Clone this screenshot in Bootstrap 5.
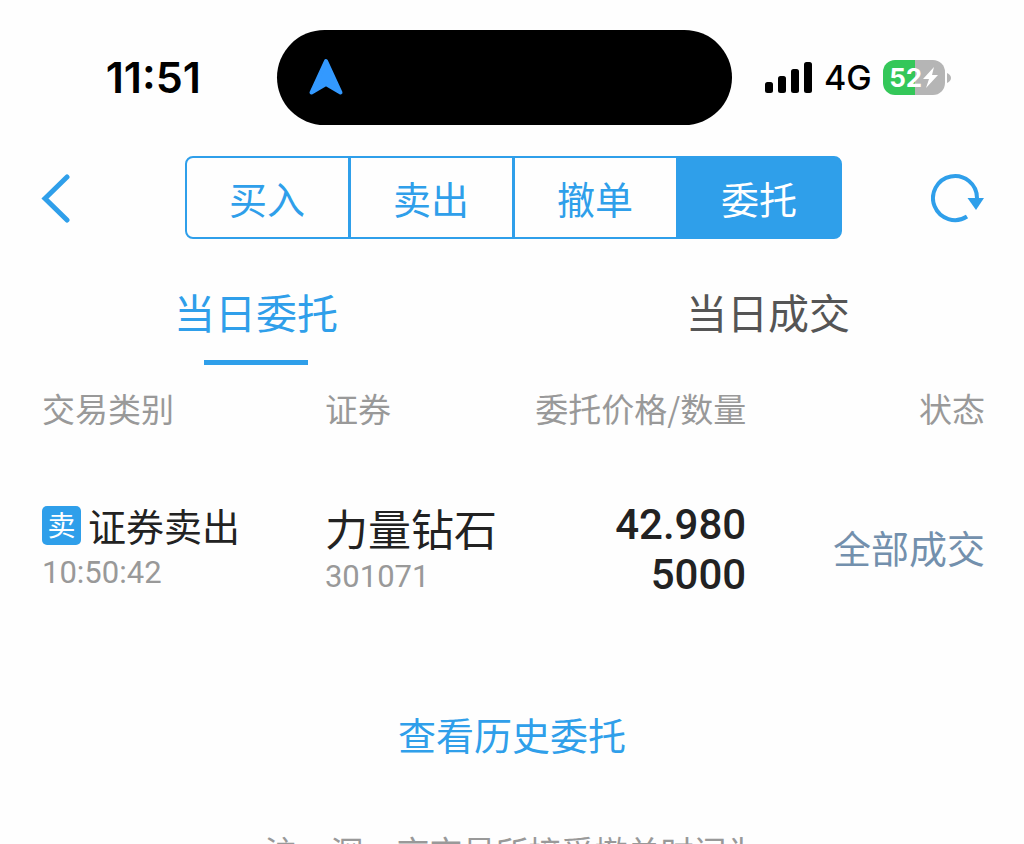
<!DOCTYPE html>
<html lang="zh-CN">
<head>
<meta charset="utf-8">
<meta name="viewport" content="width=device-width, initial-scale=1">
<title>当日委托</title>
<link href="https://cdn.jsdelivr.net/npm/bootstrap@5.3.0/dist/css/bootstrap.min.css" rel="stylesheet">
<style>
  :root { --brand: #2f9fea; --ink: #222; --muted: #999; }
  body { font-family: "Noto Sans CJK SC", sans-serif; font-weight: 400; color: var(--ink); background: #fefefe; }
  .phone-status { display: grid; grid-template-columns: 277fr 455fr 292fr; padding-top: 30px; color: #000; }
  .clock { font: 600 43px/1 Inter, sans-serif; padding-right: 76px; }
  .island { height: 95px; background: #000; padding-left: 31px; }
  .signal { gap: 11px; padding-left: 33px; }
  .network { font: 500 34px/1 Inter, sans-serif; }
  .battery-level { width: 62px; height: 35px; border-radius: 12px; background: linear-gradient(90deg, #34c759 52%, #b5b5b5 52%); color: #fff; font: 700 26px/1 Inter, sans-serif; gap: 1px; }
  .battery { gap: 2px; }
  .toolbar { padding: 31px 39px 0 41px; }
  .icon-btn { border: 0; background: none; padding: 0; line-height: 0; }
  .icon-btn.back { width: 54px; text-align: left; }
  .segments { width: 657px; height: 83px; }
  .segments .btn { --bs-btn-color: var(--brand); --bs-btn-border-color: var(--brand); --bs-btn-border-width: 2px; --bs-btn-border-radius: 8px; --bs-btn-font-size: 38px; --bs-btn-font-weight: 400; --bs-btn-line-height: 1; --bs-btn-padding-x: 0; --bs-btn-padding-y: 0; --bs-btn-active-bg: var(--brand); --bs-btn-active-border-color: var(--brand); --bs-btn-active-color: #fff; flex: 1 1 0; }
  .segments .btn:not(:first-child) { margin-left: -2px; }
  .day-tabs { padding-top: 44px; }
  .day-tabs .nav-link { color: #555; background: none; border: 0; font-size: 41px; line-height: 56px; padding: 0; }
  .day-tabs .nav-link::after { content: ""; display: block; width: 104px; height: 5px; margin: 21px auto 0; }
  .day-tabs .nav-link.active { color: var(--brand); }
  .day-tabs .nav-link.active::after { background: var(--brand); }
  .orders { padding: 0 39px 0 42px; }
  .orders table { table-layout: fixed; width: 100%; }
  .orders th { color: var(--muted); font-size: 33px; font-weight: 400; line-height: 48px; padding: 19px 0 0; white-space: nowrap; }
  .orders td { padding: 68px 0 0; white-space: nowrap; vertical-align: top; }
  .orders tr > :nth-child(3) { padding-right: 3px; }
  .c-kind { width: 30%; } .c-stock { width: 21%; } .c-price { width: 24%; } .c-state { width: 25%; }
  .kind { font-size: 38px; line-height: 50px; gap: 7px; }
  .side-tag { width: 39px; height: 39px; border-radius: 5px; background: var(--brand); color: #fff; font-size: 28px; line-height: 36px; }
  .stock { font-size: 43px; line-height: 54px; }
  .digits { font-family: Roboto, sans-serif; }
  .meta { color: var(--muted); font-size: 31px; font-weight: 400; line-height: 46px; }
  .amount { font-size: 42px; font-weight: 500; line-height: 50px; }
  .state { color: #7390ad; font-size: 38px; line-height: 94px; }
  .history { color: var(--brand); font-size: 38px; line-height: 56px; margin-top: 106px; }
  .notice { color: var(--muted); font-size: 33px; line-height: 48px; margin-top: 65px; }
</style>
</head>
<body>
<main class="vh-100 overflow-hidden">
  <header>
    <div class="phone-status">
      <div class="clock d-flex align-items-center justify-content-end">11:51</div>
      <div class="island rounded-pill d-flex align-items-center">
        <svg width="36" height="40" viewBox="0 0 36 40" aria-hidden="true"><path d="M18 3 32.500 34.500 18 26 3.500 34.500Z" fill="#3399ff" stroke="#3399ff" stroke-width="4" stroke-linejoin="round"/></svg>
      </div>
      <div class="signal d-flex align-items-center">
        <svg width="48" height="32" viewBox="0 0 48 32" aria-hidden="true"><rect y="20" width="8" height="11" rx="2.500"/><rect x="13" y="14" width="8" height="17" rx="2.500"/><rect x="26" y="7" width="8" height="24" rx="2.500"/><rect x="39" width="8" height="31" rx="2.500"/></svg>
        <span class="network">4G</span>
        <div class="battery d-flex align-items-center">
          <div class="battery-level d-flex align-items-center justify-content-center">52<svg width="15" height="21" viewBox="0 0 15 21" aria-hidden="true"><path d="M11 0 0 12h6L3 21 15 8H9Z" fill="#fff"/></svg></div>
          <svg width="4" height="10" viewBox="0 0 4 10" aria-hidden="true"><path d="M0 0Q4 2 4 5T0 10Z" fill="#b5b5b5"/></svg>
        </div>
      </div>
    </div>
    <div class="toolbar d-flex align-items-center justify-content-between">
      <button class="icon-btn back" type="button" aria-label="返回"><svg width="32" height="50" viewBox="0 0 32 50"><path d="M26 4 4 25.500 26 47" fill="none" stroke="#2f9fea" stroke-width="5" stroke-linecap="round"/></svg></button>
      <div class="segments btn-group" role="group" aria-label="交易">
        <button class="btn" type="button">买入</button>
        <button class="btn" type="button">卖出</button>
        <button class="btn" type="button">撤单</button>
        <button class="btn active" type="button" aria-pressed="true">委托</button>
      </div>
      <button class="icon-btn" type="button" aria-label="刷新"><svg width="54" height="50" viewBox="0 0 54 50"><path d="M36 43.500A22 22 0 1 1 46 25" fill="none" stroke="#2f9fea" stroke-width="4"/><path d="M36.500 25H53L45 37Z" fill="#2f9fea"/></svg></button>
    </div>
    <ul class="day-tabs nav nav-fill">
      <li class="nav-item col-6"><button class="nav-link active w-100" type="button">当日委托</button></li>
      <li class="nav-item col-6"><button class="nav-link w-100" type="button">当日成交</button></li>
    </ul>
  </header>
  <section class="orders">
    <table>
      <thead>
        <tr><th class="c-kind">交易类别</th><th class="c-stock">证券</th><th class="c-price text-end">委托价格/数量</th><th class="c-state text-end">状态</th></tr>
      </thead>
      <tbody>
        <tr>
          <td><div class="kind d-flex align-items-center"><span class="side-tag text-center">卖</span>证券卖出</div><div class="digits meta">10:50:42</div></td>
          <td><div class="stock">力量钻石</div><div class="digits meta">301071</div></td>
          <td class="text-end digits amount"><div>42.980</div><div>5000</div></td>
          <td class="text-end state">全部成交</td>
        </tr>
      </tbody>
    </table>
  </section>
  <div class="text-center"><a class="history d-inline-block text-decoration-none" href="#history">查看历史委托</a></div>
  <p class="notice text-center mb-0">沪、深、京交易所接受撤单时间为</p>
</main>
<script src="https://cdn.jsdelivr.net/npm/bootstrap@5.3.0/dist/js/bootstrap.bundle.min.js"></script>
</body>
</html>
